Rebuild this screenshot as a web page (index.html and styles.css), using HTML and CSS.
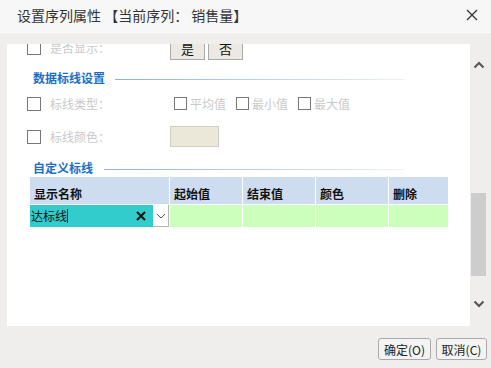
FILE: index.html
```html
<!DOCTYPE html>
<html lang="zh-CN">
<head>
    <meta charset="UTF-8">
    <title>设置序列属性</title>
    <link rel="stylesheet" href="styles.css">
</head>
<body>
    <div class="dialog">
        <div class="titlebar">
            <span class="title">设置序列属性 【当前序列： 销售量】</span>
            <svg class="close" width="12" height="12" viewBox="0 0 12 12">
                <path d="M1 1 L11 11 M11 1 L1 11" stroke="#333" stroke-width="1.3" fill="none"/>
            </svg>
        </div>

        <div class="main">
            <div class="panel">
                <div class="row first">
                    <span class="check"></span>
                    <span class="label">是否显示：</span>
                    <div class="field">
                        <button class="toggle">是</button>
                        <button class="toggle">否</button>
                    </div>
                </div>

                <div class="section">
                    <span class="section-title">数据标线设置</span>
                    <span class="section-line"></span>
                </div>

                <div class="row">
                    <span class="check"></span>
                    <span class="label">标线类型：</span>
                    <div class="field options">
                        <span class="option"><span class="check small"></span>平均值</span>
                        <span class="option"><span class="check small"></span>最小值</span>
                        <span class="option"><span class="check small"></span>最大值</span>
                    </div>
                </div>

                <div class="row row-color">
                    <span class="check"></span>
                    <span class="label">标线颜色：</span>
                    <div class="field">
                        <span class="color-box"></span>
                    </div>
                </div>

                <div class="section section-custom">
                    <span class="section-title">自定义标线</span>
                    <span class="section-line"></span>
                </div>

                <div class="grid">
                    <div class="th">显示名称</div>
                    <div class="th">起始值</div>
                    <div class="th">结束值</div>
                    <div class="th">颜色</div>
                    <div class="th">删除</div>

                    <div class="td name-cell">
                        <div class="name-input">
                            <span class="name-text">达标线</span><span class="caret"></span>
                            <svg class="clear" width="10" height="10" viewBox="0 0 10 10">
                                <path d="M1 1 L9 9 M9 1 L1 9" stroke="#111" stroke-width="2" fill="none"/>
                            </svg>
                        </div>
                        <div class="dropdown">
                            <svg width="10" height="6" viewBox="0 0 10 6">
                                <path d="M1 1 L5 5 L9 1" stroke="#555" stroke-width="1" fill="none"/>
                            </svg>
                        </div>
                    </div>
                    <div class="td"></div>
                    <div class="td"></div>
                    <div class="td"></div>
                    <div class="td"></div>
                </div>
            </div>

            <div class="scrollbar">
                <svg class="arrow up" width="12" height="8" viewBox="0 0 12 8">
                    <path d="M1.5 6.5 L6 2 L10.5 6.5" stroke="#555" stroke-width="2" fill="none"/>
                </svg>
                <div class="track">
                    <div class="thumb"></div>
                </div>
                <svg class="arrow down" width="12" height="8" viewBox="0 0 12 8">
                    <path d="M1.5 1.5 L6 6 L10.5 1.5" stroke="#555" stroke-width="2" fill="none"/>
                </svg>
            </div>
        </div>

        <div class="footer">
            <button class="btn btn-ok">确定(O)</button>
            <button class="btn btn-cancel">取消(C)</button>
        </div>
    </div>
</body>
</html>
```

FILE: styles.css
```css
body {
    margin: 0;
    background-color: #efeeec;
    font-family: "Noto Sans CJK SC", "Liberation Sans", sans-serif;
    color: #222;
}
.dialog {
    width: 491px;
    height: 368px;
}
.titlebar {
    height: 33px;
    background-color: #f7f7f7;
    display: flex;
    align-items: center;
    justify-content: space-between;
    padding: 0 13px 0 17px;
    border-bottom: 1px solid #f2f1ef;
}
.title {
    font-size: 14px;
    line-height: 16px;
    color: #333;
    margin-top: -4px;
}
.close {
    margin-top: -4px;
}
.main {
    display: flex;
    margin-top: 10px;
    padding-left: 7px;
}
.panel {
    width: 463px;
    height: 282px;
    background-color: #fff;
    overflow: hidden;
}
.row {
    display: flex;
    align-items: center;
    height: 23px;
    margin-top: 4px;
    padding-left: 20px;
}
.row.first {
    height: 24px;
    margin-top: -8px;
}
.row-color {
    margin-top: 10px;
}
.check {
    width: 12px;
    height: 12px;
    border: 1px solid #777;
    background-color: #fff;
    flex: none;
}
.label {
    width: 120px;
    margin-left: 9px;
    font-size: 12px;
    line-height: 14px;
    color: #c9c9c9;
}
.field {
    display: flex;
    align-items: center;
    gap: 3px;
}
.toggle {
    width: 35px;
    height: 24px;
    padding: 0;
    background-color: #ebe9e2;
    border: 1px solid #aaa;
    font-family: inherit;
    font-size: 13px;
    color: #111;
}
.options {
    gap: 0;
    margin-left: 4px;
}
.option {
    display: flex;
    align-items: center;
    width: 62px;
    font-size: 12px;
    line-height: 14px;
    color: #c9c9c9;
}
.check.small {
    width: 11px;
    height: 11px;
    margin-right: 3px;
}
.color-box {
    width: 47px;
    height: 19px;
    background-color: #ebe8da;
    border: 1px solid #cfcdc6;
}
.section {
    display: flex;
    align-items: center;
    height: 20px;
    margin-top: 8px;
    padding-left: 26px;
}
.section-custom {
    height: 18px;
    margin-top: 11px;
}
.section-title {
    font-size: 12px;
    line-height: 14px;
    font-weight: bold;
    color: #1b6ec5;
}
.section-line {
    height: 1px;
    width: 290px;
    margin: 3px 0 0 10px;
    background: linear-gradient(to right, #8db3d6, #d6e4ef 80%, #eef3f6);
}
.section-custom .section-line {
    width: 300px;
    margin-left: 11px;
}
.grid {
    display: grid;
    grid-template-columns: 139px 72px 72px 72px 59px;
    grid-template-rows: 27px 22px;
    gap: 1px;
    width: 418px;
    margin-left: 23px;
    background-color: #fff;
}
.th {
    background-color: #cedcef;
    font-size: 12px;
    line-height: 14px;
    font-weight: bold;
    color: #111;
    display: flex;
    align-items: flex-end;
    padding: 0 0 3px 4px;
}
.td {
    background-color: #ccffbb;
}
.name-cell {
    display: flex;
    background-color: #fff;
}
.name-input {
    flex: 1;
    display: flex;
    align-items: center;
    background-color: #33cccc;
    padding-left: 1px;
}
.name-text {
    font-size: 12px;
    line-height: 14px;
    color: #111;
}
.caret {
    width: 1px;
    height: 14px;
    background-color: #222;
}
.clear {
    margin-left: auto;
    margin-right: 7px;
}
.dropdown {
    width: 15px;
    display: flex;
    align-items: center;
    justify-content: center;
    border-right: 1px solid #b5b5b5;
    border-bottom: 1px solid #b5b5b5;
}
.scrollbar {
    width: 17px;
    height: 282px;
    display: flex;
    flex-direction: column;
    align-items: center;
}
.arrow.up {
    margin-top: 17px;
}
.track {
    flex: 1;
    width: 15px;
    position: relative;
}
.thumb {
    position: absolute;
    top: 124px;
    left: 0;
    width: 15px;
    height: 83px;
    background-color: #cdcdcd;
}
.arrow.down {
    margin-bottom: 18px;
}
.footer {
    display: flex;
    justify-content: flex-end;
    gap: 5px;
    padding: 12px 4px 0 0;
}
.btn {
    height: 22px;
    padding: 0;
    background-color: #f3f3f3;
    border: 1px solid #a9a9a9;
    border-radius: 3px;
    font-family: inherit;
    font-size: 12px;
    color: #222;
}
.btn-ok {
    width: 53px;
}
.btn-cancel {
    width: 51px;
}
```
